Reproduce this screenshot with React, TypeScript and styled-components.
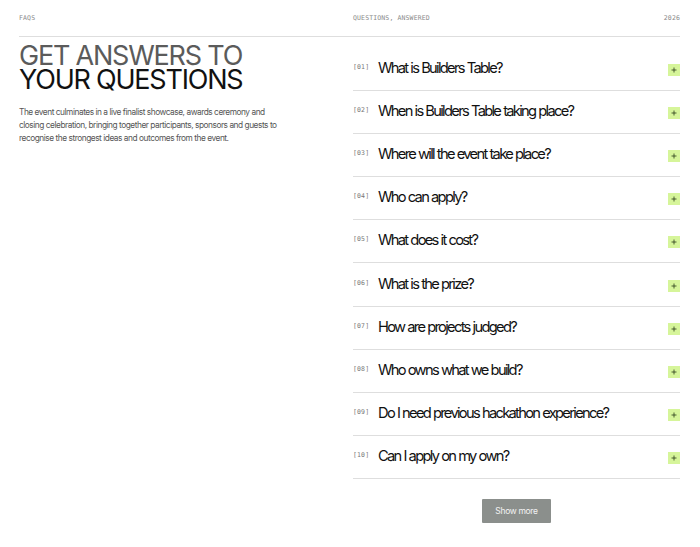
import styled, { createGlobalStyle } from 'styled-components';

const GlobalStyle = createGlobalStyle`
  body {
    margin: 0;
    background: #ffffff;
    font-family: Inter, 'Noto Sans', sans-serif;
    color: #111;
  }
`;

const Page = styled.div`
  padding: 0 20px 0 19px;
  box-sizing: border-box;
  width: 700px;
  min-height: 547px;
`;

const TopBar = styled.header`
  display: grid;
  grid-template-columns: 334px 1fr;
  height: 36px;
  align-items: center;
  border-bottom: 1px solid #dedede;
`;

const Mono = styled.span`
  font-family: 'DejaVu Sans Mono', 'Liberation Mono', monospace;
  font-size: 6.5px;
  letter-spacing: 0.02em;
  color: #8a8a8a;
  text-transform: uppercase;
`;

const TopRight = styled.div`
  display: flex;
  justify-content: space-between;
`;

const Columns = styled.main`
  display: grid;
  grid-template-columns: 334px 1fr;
`;

const Intro = styled.section`
  padding-top: 7px;
`;

const Heading = styled.h1`
  margin: 0;
  font-family: Inter, sans-serif;
  font-weight: 400;
  font-size: 27px;
  line-height: 23.5px;
  letter-spacing: -0.045em;
`;

const HeadLine = styled.span<{ $muted?: boolean }>`
  display: block;
  color: ${({ $muted }) => ($muted ? '#5b5b5b' : '#111111')};
`;

const Lead = styled.p`
  margin: 15px 0 0;
  width: 268px;
  font-size: 8.3px;
  line-height: 13px;
  letter-spacing: -0.055em;
  color: #555;
`;

const FaqList = styled.section`
  padding-top: 11px;
  display: flex;
  flex-direction: column;
`;

const Row = styled.div`
  display: flex;
  align-items: center;
  height: 42.1px;
  border-bottom: 1px solid #dedede;
`;

const Num = styled(Mono)`
  width: 25px;
  flex: none;
  color: #777;
  margin-top: -4px;
`;

const Question = styled.span`
  flex: 1;
  font-size: 14.7px;
  letter-spacing: -0.115em;
  word-spacing: 0.03em;
  color: #111;
  margin-top: -2px;
`;

const PlusBox = styled.span`
  width: 12px;
  height: 12px;
  background: #d6f59a;
  display: flex;
  align-items: center;
  justify-content: center;
  margin-top: 2px;
`;

const ButtonWrap = styled.div`
  display: flex;
  justify-content: center;
  padding-top: 20px;
`;

const ShowMore = styled.button`
  width: 69px;
  height: 24px;
  border: none;
  border-radius: 1px;
  background: #8b8f8c;
  color: #f2f2f2;
  font-family: Inter, sans-serif;
  font-size: 8.5px;
  letter-spacing: -0.04em;
  padding: 0;
`;

const questions = [
  'What is Builders Table?',
  'When is Builders Table taking place?',
  'Where will the event take place?',
  'Who can apply?',
  'What does it cost?',
  'What is the prize?',
  'How are projects judged?',
  'Who owns what we build?',
  'Do I need previous hackathon experience?',
  'Can I apply on my own?',
];

const Plus = () => (
  <svg width="6" height="6" viewBox="0 0 6 6">
    <path d="M3 0.5v5M0.5 3h5" stroke="#2a3a1a" strokeWidth="0.8" />
  </svg>
);

export default function App() {
  return (
    <>
      <GlobalStyle />
      <Page>
        <TopBar>
          <Mono>FAQs</Mono>
          <TopRight>
            <Mono>Questions, answered</Mono>
            <Mono>2026</Mono>
          </TopRight>
        </TopBar>
        <Columns>
          <Intro>
            <Heading>
              <HeadLine $muted>GET ANSWERS TO</HeadLine>
              <HeadLine>YOUR QUESTIONS</HeadLine>
            </Heading>
            <Lead>
              The event culminates in a live finalist showcase, awards ceremony and closing
              celebration, bringing together participants, sponsors and guests to recognise the
              strongest ideas and outcomes from the event.
            </Lead>
          </Intro>
          <FaqList>
            {questions.map((q, i) => (
              <Row key={q}>
                <Num>[{String(i + 1).padStart(2, '0')}]</Num>
                <Question>{q}</Question>
                <PlusBox>
                  <Plus />
                </PlusBox>
              </Row>
            ))}
            <ButtonWrap>
              <ShowMore>Show more</ShowMore>
            </ButtonWrap>
          </FaqList>
        </Columns>
      </Page>
    </>
  );
}
